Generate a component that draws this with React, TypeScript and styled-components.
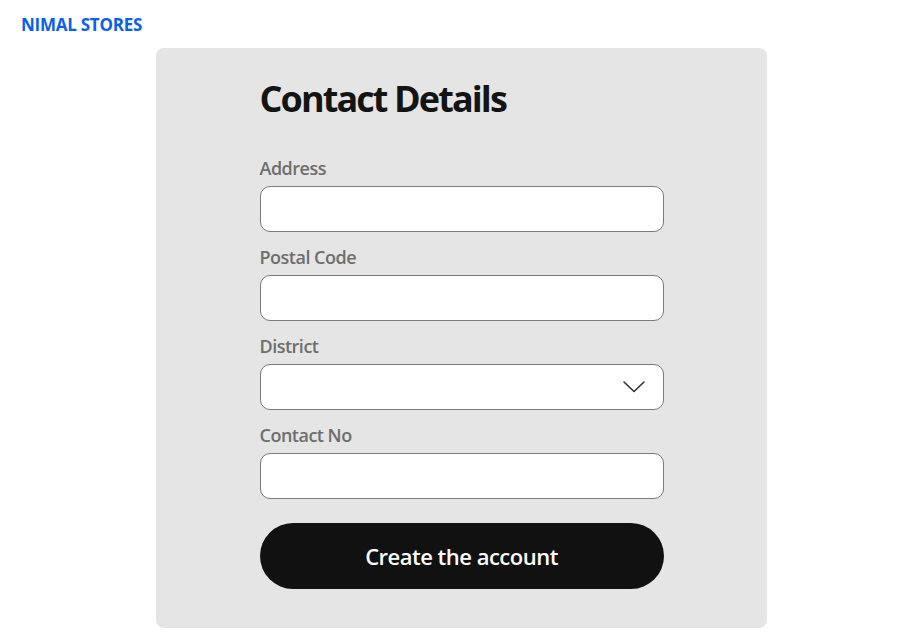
import React from "react";
import styled, { createGlobalStyle } from "styled-components";

const Global = createGlobalStyle`
  html, body { margin: 0; padding: 0; background: #ffffff; }
  body { font-family: "Open Sans", "Noto Sans", sans-serif; }
  * { box-sizing: border-box; }
`;

const Page = styled.div`
  display: flex;
  flex-direction: column;
  padding: 14px 0 10px 0;
`;

const Brand = styled.div`
  padding-left: 21px;
  font-size: 17px;
  font-weight: 700;
  color: #0b61e6;
  letter-spacing: -0.25px;
  line-height: 22px;
`;

const Card = styled.div`
  margin: 12px 0 0 156px;
  width: 611px;
  background: #e5e5e5;
  border-radius: 8px;
  display: flex;
  justify-content: center;
  padding: 26px 0 39px 0;
`;

const Form = styled.form`
  width: 404px;
  display: flex;
  flex-direction: column;
`;

const Title = styled.h1`
  margin: 0 0 32px 0;
  font-size: 36px;
  font-weight: 700;
  color: #141414;
  letter-spacing: -1.9px;
  line-height: 50px;
`;

const Field = styled.div`
  display: flex;
  flex-direction: column;
  margin-bottom: 13px;
`;

const Label = styled.label`
  font-size: 18px;
  font-weight: 600;
  color: #6e6e6e;
  letter-spacing: -0.5px;
  line-height: 24px;
  margin-bottom: 6px;
`;

const Input = styled.input`
  height: 46px;
  width: 100%;
  border: 1px solid #7a7a7a;
  border-radius: 10px;
  background: #ffffff;
  padding: 0 14px;
  font-size: 16px;
  font-family: inherit;
  outline: none;
`;

const SelectBox = styled.div`
  position: relative;
  height: 46px;
  width: 100%;
  border: 1px solid #7a7a7a;
  border-radius: 10px;
  background: #ffffff;
`;

const Chevron = styled.svg`
  position: absolute;
  right: 18px;
  top: 50%;
  transform: translateY(-50%);
`;

const Button = styled.button`
  margin-top: 11px;
  height: 66px;
  width: 100%;
  border: none;
  border-radius: 33px;
  background: #111111;
  color: #ffffff;
  font-family: inherit;
  font-size: 22px;
  font-weight: 600;
  letter-spacing: -0.5px;
  cursor: pointer;
`;

export default function App() {
  return (
    <>
      <Global />
      <Page>
        <Brand>NIMAL STORES</Brand>
        <Card>
          <Form onSubmit={(e) => e.preventDefault()}>
            <Title>Contact Details</Title>
            <Field>
              <Label>Address</Label>
              <Input type="text" />
            </Field>
            <Field>
              <Label>Postal Code</Label>
              <Input type="text" />
            </Field>
            <Field>
              <Label>District</Label>
              <SelectBox>
                <Chevron width="22" height="12" viewBox="0 0 22 12" fill="none">
                  <path d="M1 1 L11 10.5 L21 1" stroke="#333" strokeWidth="1.6" strokeLinecap="round" strokeLinejoin="round" />
                </Chevron>
              </SelectBox>
            </Field>
            <Field>
              <Label>Contact No</Label>
              <Input type="text" />
            </Field>
            <Button type="submit">Create the account</Button>
          </Form>
        </Card>
      </Page>
    </>
  );
}
